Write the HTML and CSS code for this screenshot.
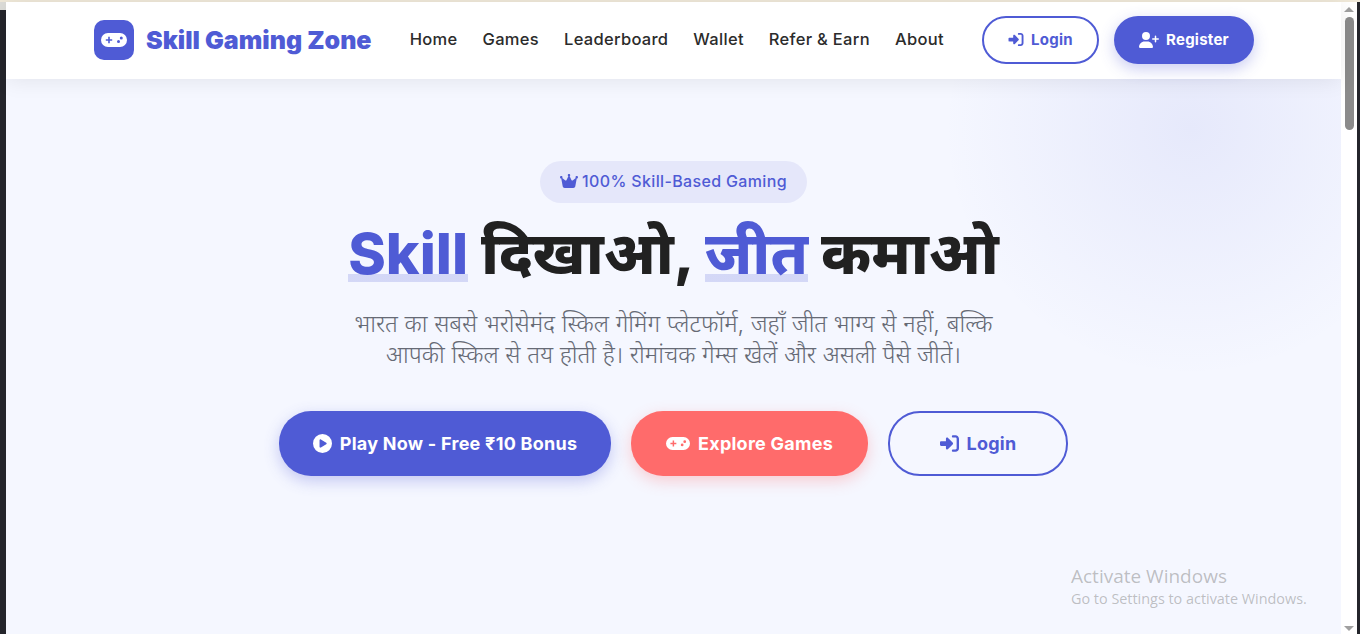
FILE: index.html
```html
<!DOCTYPE html>
<html lang="hi">
<head>
  <meta charset="UTF-8">
  <meta name="viewport" content="width=device-width, initial-scale=1.0">
  <title>Skill Gaming Zone</title>
  <link rel="stylesheet" href="styles.css">
</head>
<body>
  <svg class="icon-sprite" aria-hidden="true">
    <symbol id="i-gamepad" viewBox="0 0 26 14"><path fill-rule="evenodd" d="M7 0H19A7 7 0 0 1 19 14H7A7 7 0 0 1 7 0ZM7.2 3.8V6.2H4.8V7.8H7.2V10.2H8.8V7.8H11.2V6.2H8.8V3.8ZM17.5 7a1.5 1.5 0 1 0 0 3a1.5 1.5 0 1 0 0-3ZM20.3 3.5a1.5 1.5 0 1 0 0 3a1.5 1.5 0 1 0 0-3Z"/></symbol>
    <symbol id="i-login" viewBox="0 0 512 512"><path d="M217.9 105.9L340.7 228.7c7.2 7.2 11.3 17.1 11.3 27.3s-4.1 20.1-11.3 27.3L217.9 406.1c-6.4 6.4-15 9.9-24 9.9c-18.7 0-33.9-15.2-33.9-33.9l0-62.1L32 320c-17.7 0-32-14.3-32-32l0-64c0-17.7 14.3-32 32-32l128 0 0-62.1c0-18.7 15.2-33.9 33.9-33.9c9 0 17.6 3.6 24 9.9zM352 416l64 0c17.7 0 32-14.3 32-32l0-256c0-17.7-14.3-32-32-32l-64 0c-17.7 0-32-14.3-32-32s14.3-32 32-32l64 0c53 0 96 43 96 96l0 256c0 53-43 96-96 96l-64 0c-17.7 0-32-14.3-32-32s14.3-32 32-32z"/></symbol>
    <symbol id="i-user-plus" viewBox="0 0 640 512"><path d="M96 128a128 128 0 1 1 256 0A128 128 0 1 1 96 128zM0 482.3C0 383.8 79.8 304 178.3 304h91.4C368.2 304 448 383.8 448 482.3c0 16.4-13.3 29.7-29.7 29.7H29.7C13.3 512 0 498.7 0 482.3zM504 312V248H440c-13.3 0-24-10.7-24-24s10.7-24 24-24h64V136c0-13.3 10.7-24 24-24s24 10.7 24 24v64h64c13.3 0 24 10.7 24 24s-10.7 24-24 24H552v64c0 13.3-10.7 24-24 24s-24-10.7-24-24z"/></symbol>
    <symbol id="i-crown" viewBox="0 0 576 512"><path d="M309 106c11.4-7 19-19.7 19-34c0-22.1-17.9-40-40-40s-40 17.9-40 40c0 14.4 7.6 27 19 34L209.7 220.6c-9.1 18.2-32.7 23.4-48.6 10.7L72 160c5-6.7 8-15 8-24c0-22.1-17.9-40-40-40S0 113.9 0 136s17.9 40 40 40c.2 0 .5 0 .7 0L86.4 427.4c5.5 30.4 32 52.6 63 52.6H426.6c30.9 0 57.4-22.1 63-52.6L535.3 176c.2 0 .5 0 .7 0c22.1 0 40-17.9 40-40s-17.9-40-40-40s-40 17.9-40 40c0 9 3 17.3 8 24l-89.1 71.3c-15.9 12.7-39.5 7.5-48.6-10.7L309 106z"/></symbol>
    <symbol id="i-play" viewBox="0 0 512 512"><path d="M0 256a256 256 0 1 1 512 0A256 256 0 1 1 0 256zM188.3 147.1c-7.6 4.2-12.3 12.3-12.3 20.9V344c0 8.7 4.7 16.7 12.3 20.9s16.8 4.1 24.3-.5l144-88c7.1-4.4 11.5-12.1 11.5-20.5s-4.4-16.1-11.5-20.5l-144-88c-7.4-4.5-16.7-4.7-24.3-.5z"/></symbol>
  </svg>

  <div class="window">
    <div class="edge-left"></div>
    <div class="page">
      <header class="navbar">
        <div class="nav-inner">
          <a href="#" class="logo">
            <span class="logo-icon"><svg><use href="#i-gamepad"/></svg></span>
            <span class="logo-text">Skill Gaming Zone</span>
          </a>
          <nav class="nav-links">
            <a href="#">Home</a>
            <a href="#">Games</a>
            <a href="#">Leaderboard</a>
            <a href="#">Wallet</a>
            <a href="#">Refer &amp; Earn</a>
            <a href="#">About</a>
          </nav>
          <div class="nav-actions">
            <a href="#" class="btn btn-outline btn-nav-login"><svg class="btn-icon-sm"><use href="#i-login"/></svg>Login</a>
            <a href="#" class="btn btn-primary btn-nav-register"><svg class="btn-icon-user"><use href="#i-user-plus"/></svg>Register</a>
          </div>
        </div>
      </header>

      <section class="hero">
        <div class="badge"><svg class="badge-icon"><use href="#i-crown"/></svg>100% Skill-Based Gaming</div>
        <h1><span class="highlight highlight-latin">Skill</span> दिखाओ, <span class="highlight">जीत</span> कमाओ</h1>
        <p class="subtitle">भारत का सबसे भरोसेमंद स्किल गेमिंग प्लेटफॉर्म, जहाँ जीत भाग्य से नहीं, बल्कि<br>आपकी स्किल से तय होती है। रोमांचक गेम्स खेलें और असली पैसे जीतें।</p>
        <div class="hero-buttons">
          <a href="#" class="btn btn-large btn-primary btn-play"><svg class="btn-icon-lg"><use href="#i-play"/></svg>Play Now - Free ₹10 Bonus</a>
          <a href="#" class="btn btn-large btn-accent btn-explore"><svg class="btn-icon-pad"><use href="#i-gamepad"/></svg>Explore Games</a>
          <a href="#" class="btn btn-large btn-outline btn-hero-login"><svg class="btn-icon-lg"><use href="#i-login"/></svg>Login</a>
        </div>
        <div class="watermark">
          <div class="watermark-title">Activate Windows</div>
          <div class="watermark-sub">Go to Settings to activate Windows.</div>
        </div>
      </section>
    </div>
    <div class="scrollbar">
      <span class="arrow-up"></span>
      <span class="thumb"></span>
      <span class="arrow-down"></span>
    </div>
    <div class="edge-right"></div>
  </div>
</body>
</html>
```

FILE: styles.css
```css
:root {
  --primary: #4f5bd5;
  --accent: #ff6b6b;
  --text: #212121;
  --muted: #666a75;
  --hero-bg: #f5f7ff;
  --ui-font: "Inter", "Noto Sans", "Noto Sans Devanagari", "Lohit Devanagari", sans-serif;
}
* {
  box-sizing: border-box;
  margin: 0;
  padding: 0;
}
html, body {
  height: 100%;
  overflow: hidden;
}
body {
  font-family: var(--ui-font);
  color: var(--text);
  background: #1e1f24;
}
a {
  text-decoration: none;
  color: inherit;
}
.icon-sprite {
  display: none;
}
.window {
  display: flex;
  height: 100%;
  border-top: 2px solid #efe8d8;
}
.edge-left {
  width: 6px;
  background: linear-gradient(#dcdcd8 0 8px, #24252b 8px);
}
.edge-right {
  width: 3px;
  background: #24252b;
}
.page {
  flex: 1;
  display: flex;
  flex-direction: column;
  min-width: 0;
}

/* navbar */
.navbar {
  height: 77px;
  padding: 0 0 2px 88px;
  background: #fff;
  box-shadow: 0 2px 20px rgba(0,0,0,0.08);
  position: relative;
  z-index: 2;
  display: flex;
}
.nav-inner {
  width: 1160px;
  display: flex;
  align-items: center;
  justify-content: space-between;
}
.logo {
  display: flex;
  align-items: center;
  gap: 12px;
}
.logo-icon {
  width: 40px;
  height: 40px;
  border-radius: 10px;
  background: var(--primary);
  display: flex;
  align-items: center;
  justify-content: center;
}
.logo-icon svg {
  width: 26px;
  height: 14px;
  fill: #fff;
}
.logo-text {
  font-size: 25px;
  font-weight: 900;
  color: var(--primary);
}
.nav-links {
  display: flex;
  gap: 25px;
  padding-bottom: 2px;
  font-size: 16.5px;
  font-weight: 450;
  letter-spacing: 0.3px;
  color: #2b2b2b;
}
.nav-actions {
  display: flex;
  gap: 15px;
}

/* buttons */
.btn {
  display: flex;
  align-items: center;
  justify-content: center;
  border-radius: 30px;
  font-weight: 700;
  font-size: 15px;
  letter-spacing: 0.25px;
}
.btn svg {
  fill: currentColor;
}
.btn-primary {
  background: var(--primary);
  color: #fff;
  box-shadow: 0 5px 15px rgba(79,91,213,0.3);
}
.btn-outline {
  border: 2px solid var(--primary);
  color: var(--primary);
}
.btn-accent {
  background: var(--accent);
  color: #fff;
  box-shadow: 0 5px 15px rgba(255,107,107,0.3);
}
.btn-nav-login {
  width: 117px;
  height: 48px;
  gap: 7px;
}
.btn-nav-register {
  width: 140px;
  height: 48px;
  gap: 7px;
}
.btn-icon-sm {
  width: 16px;
  height: 15px;
}
.btn-icon-user {
  width: 20px;
  height: 16px;
}
.btn-large {
  height: 65px;
  border-radius: 32px;
  font-size: 18px;
  gap: 8px;
}
.btn-icon-lg {
  width: 19px;
  height: 19px;
}
.btn-icon-pad {
  width: 24px;
  height: 13px;
}
.btn-play {
  width: 332px;
}
.btn-explore {
  width: 237px;
}
.btn-hero-login {
  width: 180px;
}

/* hero */
.hero {
  flex: 1;
  position: relative;
  overflow: hidden;
  display: flex;
  flex-direction: column;
  align-items: center;
  padding-top: 82px;
  background: var(--hero-bg);
}
.hero::before {
  content: "";
  position: absolute;
  top: -200px;
  right: -100px;
  width: 500px;
  height: 500px;
  border-radius: 50%;
  background: radial-gradient(circle, rgba(79,91,213,0.09) 0%, rgba(79,91,213,0) 70%);
}
.badge {
  height: 42px;
  width: 267px;
  padding-bottom: 2px;
  border-radius: 21px;
  background: #e5e7fa;
  color: var(--primary);
  font-size: 16px;
  font-weight: 500;
  letter-spacing: 0.35px;
  display: flex;
  align-items: center;
  justify-content: center;
  gap: 4px;
  position: relative;
}
.badge-icon {
  width: 18px;
  height: 16px;
  fill: currentColor;
}
h1 {
  font-size: 59.2px;
  font-weight: 800;
  line-height: 84px;
  margin-top: 8px;
  position: relative;
}
.highlight {
  color: var(--primary);
  background: linear-gradient(rgba(79,91,213,0.2), rgba(79,91,213,0.2)) no-repeat left 0 bottom 6px / 100% 8px;
}
.highlight-latin {
  font-size: 57px;
}
.subtitle {
  font-size: 23.7px;
  line-height: 31px;
  font-weight: 300;
  color: var(--muted);
  text-align: center;
  margin-top: 12px;
  position: relative;
}
.hero-buttons {
  display: flex;
  gap: 20px;
  margin-top: 41px;
  position: relative;
}
.watermark {
  position: absolute;
  left: 1065px;
  top: 484px;
  color: rgba(120,120,120,0.45);
  font-family: "Open Sans", sans-serif;
}
.watermark-title {
  font-size: 19px;
}
.watermark-sub {
  font-size: 14.4px;
}

/* scrollbar */
.scrollbar {
  width: 16px;
  background: #fff;
  display: flex;
  flex-direction: column;
  align-items: center;
  padding: 5px 0 3px;
}
.arrow-up, .arrow-down {
  width: 0;
  height: 0;
  border-left: 5px solid transparent;
  border-right: 5px solid transparent;
}
.arrow-up {
  border-bottom: 5px solid #a0a0a0;
}
.arrow-down {
  border-top: 5px solid #a0a0a0;
}
.thumb {
  width: 9px;
  height: 113px;
  margin-top: 5px;
  margin-bottom: auto;
  background: #8b8b8b;
  border-radius: 5px;
}
```
